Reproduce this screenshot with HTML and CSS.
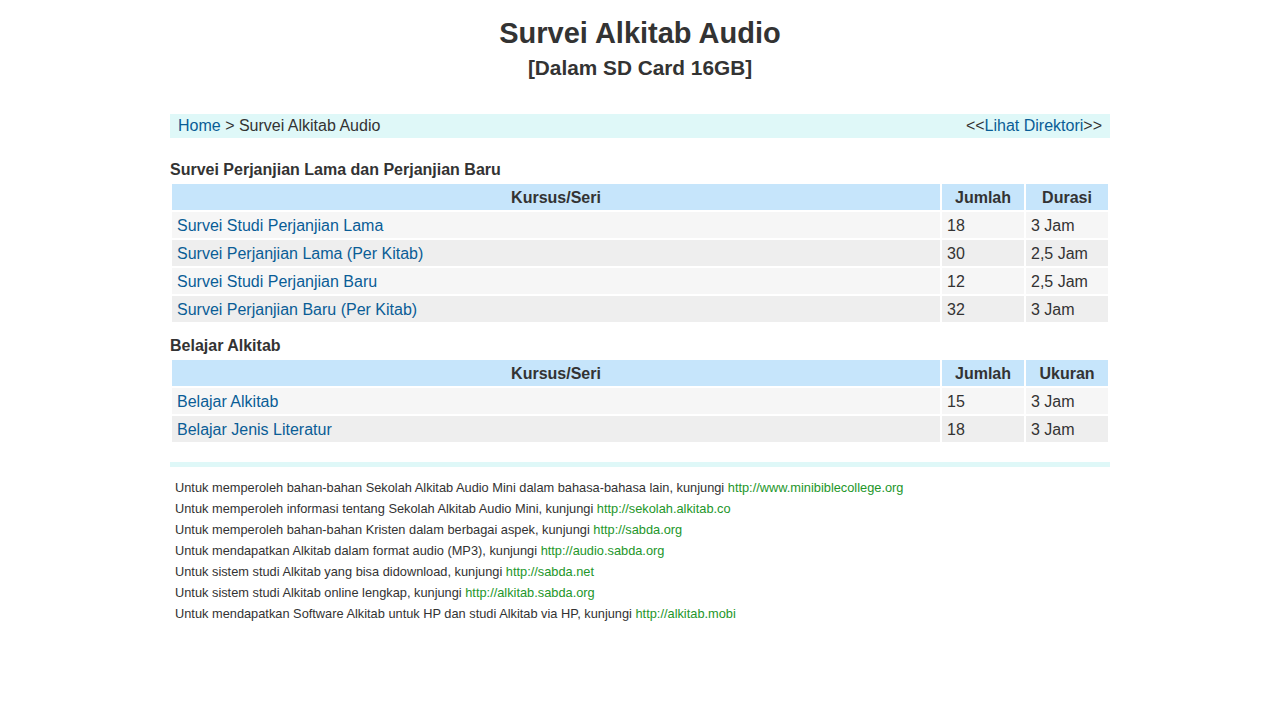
FILE: index.html
```html
<!DOCTYPE html>
<html lang="id">
<head>
<meta charset="utf-8">
<title>Survei Alkitab Audio</title>
<link rel="stylesheet" href="styles.css">
</head>
<body>
<div class="wrap">
  <h1 class="title">Survei Alkitab Audio</h1>
  <h2 class="subtitle">[Dalam SD Card 16GB]</h2>

  <div class="crumbs">
    <div><a href="#">Home</a> &gt; Survei Alkitab Audio</div>
    <div>&lt;&lt;<a href="#">Lihat Direktori</a>&gt;&gt;</div>
  </div>

  <h3 class="sec">Survei Perjanjian Lama dan Perjanjian Baru</h3>
  <table class="list">
    <tr><th class="c1">Kursus/Seri</th><th class="c2">Jumlah</th><th class="c3">Durasi</th></tr>
    <tr class="odd"><td><a href="#">Survei Studi Perjanjian Lama</a></td><td>18</td><td>3 Jam</td></tr>
    <tr class="even"><td><a href="#">Survei Perjanjian Lama (Per Kitab)</a></td><td>30</td><td>2,5 Jam</td></tr>
    <tr class="odd"><td><a href="#">Survei Studi Perjanjian Baru</a></td><td>12</td><td>2,5 Jam</td></tr>
    <tr class="even"><td><a href="#">Survei Perjanjian Baru (Per Kitab)</a></td><td>32</td><td>3 Jam</td></tr>
  </table>

  <h3 class="sec sec2">Belajar Alkitab</h3>
  <table class="list">
    <tr><th class="c1">Kursus/Seri</th><th class="c2">Jumlah</th><th class="c3">Ukuran</th></tr>
    <tr class="odd"><td><a href="#">Belajar Alkitab</a></td><td>15</td><td>3 Jam</td></tr>
    <tr class="even"><td><a href="#">Belajar Jenis Literatur</a></td><td>18</td><td>3 Jam</td></tr>
  </table>

  <div class="bar"></div>

  <div class="foot">
    <p>Untuk memperoleh bahan-bahan Sekolah Alkitab Audio Mini dalam bahasa-bahasa lain, kunjungi <a href="#">http://www.minibiblecollege.org</a></p>
    <p>Untuk memperoleh informasi tentang Sekolah Alkitab Audio Mini, kunjungi <a href="#">http://sekolah.alkitab.co</a></p>
    <p>Untuk memperoleh bahan-bahan Kristen dalam berbagai aspek, kunjungi <a href="#">http://sabda.org</a></p>
    <p>Untuk mendapatkan Alkitab dalam format audio (MP3), kunjungi <a href="#">http://audio.sabda.org</a></p>
    <p>Untuk sistem studi Alkitab yang bisa didownload, kunjungi <a href="#">http://sabda.net</a></p>
    <p>Untuk sistem studi Alkitab online lengkap, kunjungi <a href="#">http://alkitab.sabda.org</a></p>
    <p>Untuk mendapatkan Software Alkitab untuk HP dan studi Alkitab via HP, kunjungi <a href="#">http://alkitab.mobi</a></p>
  </div>
</div>
</body>
</html>
```

FILE: styles.css
```css
html, body {
  margin: 0;
  padding: 0;
  background: #ffffff;
}
body {
  font-family: "Liberation Sans", Arial, sans-serif;
  color: #333333;
  font-size: 16px;
}
a {
  color: #0a5d96;
  text-decoration: none;
}
.wrap {
  width: 940px;
  margin: 0 auto;
}
.title {
  margin: 16px 0 0;
  font-size: 29px;
  line-height: 34px;
  text-align: center;
  font-weight: bold;
}
.subtitle {
  margin: 6px 0 0;
  font-size: 20.8px;
  line-height: 24px;
  text-align: center;
  font-weight: bold;
}
.crumbs {
  margin-top: 34px;
  height: 24px;
  line-height: 24px;
  background: #dff8f8;
  padding: 0 8px;
  display: flex;
  justify-content: space-between;
}
.sec {
  margin: 23px 0 0;
  font-size: 16px;
  line-height: 18px;
  font-weight: bold;
}
.sec2 {
  margin-top: 13px;
}
.list {
  width: 940px;
  border-spacing: 2px;
  border-collapse: separate;
  margin-top: 3px;
}
.list th,
.list td {
  line-height: 18px;
  padding: 5px 5px 3px;
}
.list th {
  background: #c6e5fb;
  font-weight: bold;
  text-align: center;
}
.list td {
  text-align: left;
}
.list .c2, .list .c3 {
  width: 72px;
}
.odd td {
  background: #f6f6f6;
}
.even td {
  background: #eeeeee;
}
.bar {
  margin-top: 18px;
  height: 5px;
  background: #dff8f8;
}
.foot {
  padding: 10px 5px 0;
  font-size: 12.8px;
}
.foot p {
  margin: 0;
  line-height: 21px;
}
.foot a {
  color: #23962a;
}
```
